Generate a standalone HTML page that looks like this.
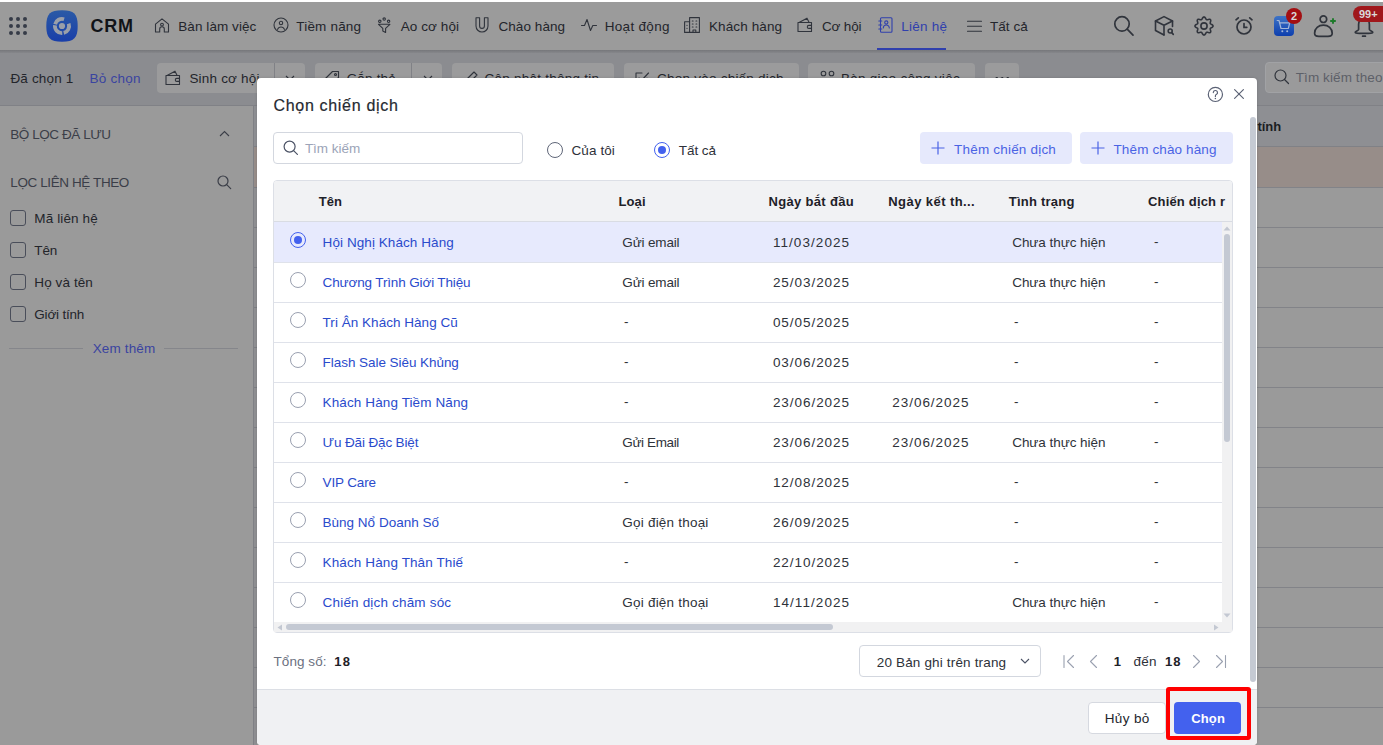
<!DOCTYPE html>
<html><head><meta charset="utf-8"><title>CRM</title>
<style>
html,body{margin:0;padding:0;}
body{width:1383px;height:745px;overflow:hidden;position:relative;font-family:"Liberation Sans", sans-serif;background:#9a9a9a;}
.t{position:absolute;white-space:nowrap;line-height:1;}
#bg,#modal,#top{position:absolute;left:0;top:0;width:1383px;height:745px;}
svg{display:block}
</style></head><body>
<div id="bg"><div style="position:absolute;left:0px;top:2px;width:1383px;height:48px;background:#9b9b9b"></div><div style="position:absolute;left:0px;top:50px;width:1383px;height:4px;background:linear-gradient(#76777b,#8b8c90)"></div><svg style="position:absolute;left:0px;top:0px;overflow:visible" width="40" height="50" viewBox="0 0 40 50"><g fill="#363b47"><circle cx="11" cy="19" r="2"/><circle cx="11" cy="26" r="2"/><circle cx="11" cy="33" r="2"/><circle cx="18" cy="19" r="2"/><circle cx="18" cy="26" r="2"/><circle cx="18" cy="33" r="2"/><circle cx="25" cy="19" r="2"/><circle cx="25" cy="26" r="2"/><circle cx="25" cy="33" r="2"/></g></svg><svg style="position:absolute;left:46px;top:10px;overflow:visible" width="32" height="32" viewBox="0 0 32 32"><defs><linearGradient id="lg" x1="0" y1="0" x2="0" y2="1"><stop offset="0" stop-color="#2b5aa6"/><stop offset="1" stop-color="#193ea9"/></linearGradient></defs>
<path d="M16 0.3C28 0.3 31.7 4 31.7 16S28 31.7 16 31.7 0.3 28 0.3 16 4 0.3 16 0.3Z" fill="url(#lg)"/>
<g fill="none" stroke="#9a9fa9" stroke-width="3.8"><path d="M9.14 14.16A7.1 7.1 0 0 1 18.08 9.21"/><path d="M22.67 13.57A7.1 7.1 0 0 1 17.72 22.89"/><path d="M16.25 23.10A7.1 7.1 0 0 1 8.94 15.26"/></g>
<circle cx="16" cy="16" r="3.1" fill="#9a9fa9"/></svg><svg style="position:absolute;left:153.7px;top:17px;overflow:visible" width="16" height="16" viewBox="0 0 16 16"><g fill="none" stroke="#30343c" stroke-width="1.1" stroke-linecap="round" stroke-linejoin="round"><path d="M1.5 7.2L8 1.8l6.5 5.4V15H10.3v-3a2.3 2.3 0 0 0-4.6 0v3H1.5Z"/><circle cx="8" cy="7.6" r="1.4"/></g></svg><svg style="position:absolute;left:272.7px;top:17px;overflow:visible" width="16" height="16" viewBox="0 0 16 16"><g fill="none" stroke="#30343c" stroke-width="1.1" stroke-linecap="round" stroke-linejoin="round"><circle cx="8" cy="8" r="7"/><circle cx="8" cy="6" r="1.7"/><path d="M4.6 12.4a3.6 3.6 0 0 1 6.8 0"/></g></svg><svg style="position:absolute;left:377.6px;top:17px;overflow:visible" width="16" height="16" viewBox="0 0 16 16"><g fill="none" stroke="#30343c" stroke-width="1.1" stroke-linecap="round" stroke-linejoin="round"><circle cx="1.8" cy="4.3" r="1.2"/><circle cx="6.2" cy="2.1" r="1.2"/><circle cx="10.6" cy="4.3" r="1.2"/><path d="M0.5 7.3h11.4L7.6 11.3v4.2l-2.8-1.5v-2.7Z"/></g></svg><svg style="position:absolute;left:474.8px;top:17px;overflow:visible" width="16" height="16" viewBox="0 0 16 16"><g fill="none" stroke="#30343c" stroke-width="1.1" stroke-linecap="round" stroke-linejoin="round"><path d="M1 0.8h3.6v8.2a2.4 2.4 0 0 0 4.8 0V0.8h3.6v8.2a6 6 0 0 1-12 0Z"/></g></svg><svg style="position:absolute;left:581px;top:17px;overflow:visible" width="16" height="16" viewBox="0 0 16 16"><g fill="none" stroke="#30343c" stroke-width="1.1" stroke-linecap="round" stroke-linejoin="round"><path d="M0.5 8.5h3l2.5-6 3.5 11 2.3-5h3.7"/></g></svg><svg style="position:absolute;left:683.9px;top:17px;overflow:visible" width="16" height="16" viewBox="0 0 16 16"><g fill="none" stroke="#30343c" stroke-width="1.1" stroke-linecap="round" stroke-linejoin="round"><path d="M0.6 15.4V4.8h5V0.6h9.8v14.8Z"/><path d="M5.6 4.8v10.6"/><path d="M3 8.2v.3M3 11.2v.3M8.3 4h.8M12 4h.8M8.3 7h.8M12 7h.8M8.3 10h.8M12 10h.8"/><path d="M9 15.4v-2.4h2.8v2.4"/></g></svg><svg style="position:absolute;left:796.9px;top:17px;overflow:visible" width="16" height="16" viewBox="0 0 16 16"><g fill="none" stroke="#30343c" stroke-width="1.1" stroke-linecap="round" stroke-linejoin="round"><path d="M1 5.5h13.5v9H1Z" /><path d="M2.5 5.3L10 1.2l2 4"/><path d="M14.5 8.4h-2.7a1.5 1.5 0 0 0 0 3h2.7"/></g></svg><svg style="position:absolute;left:878.2px;top:17px;overflow:visible" width="16" height="16" viewBox="0 0 16 16"><g fill="none" stroke="#3040ad" stroke-width="1.1" stroke-linecap="round" stroke-linejoin="round"><rect x="2.5" y="0.8" width="11.5" height="14.4" rx="1"/><circle cx="8.3" cy="5.5" r="1.6"/><path d="M5.3 11a3 3 0 0 1 6 0"/><path d="M0.8 4h3M0.8 8h3M0.8 12h3"/></g></svg><svg style="position:absolute;left:966.7px;top:17px;overflow:visible" width="16" height="16" viewBox="0 0 16 16"><g fill="none" stroke="#30343c" stroke-width="1.1" stroke-linecap="round" stroke-linejoin="round"><path d="M0.5 4.3h14M0.5 9.3h14M0.5 14.2h14"/></g></svg><div style="position:absolute;left:877px;top:48px;width:69px;height:2px;background:#3040ad"></div><svg style="position:absolute;left:1113px;top:16px;overflow:visible" width="22" height="22" viewBox="0 0 22 22"><g fill="none" stroke="#30343c" stroke-width="1.7" stroke-linecap="round"><circle cx="9" cy="7.9" r="7.2"/><path d="M14.2 13.2l5.8 5.9"/></g></svg><svg style="position:absolute;left:1154px;top:16px;overflow:visible" width="22" height="22" viewBox="0 0 22 22"><g fill="none" stroke="#30343c" stroke-width="1.6" stroke-linejoin="round" stroke-linecap="round"><path d="M18.5 10.5V5L10 0.6 1.5 5v9.5L10 19"/><path d="M1.5 5L10 9.3 18.5 5M10 9.3V19"/><circle cx="16.2" cy="15" r="2"/><path d="M17.7 16.6l1.6 1.8"/></g></svg><svg style="position:absolute;left:1194px;top:16px;overflow:visible" width="20" height="20" viewBox="0 0 20 20"><g fill="none" stroke="#30343c" stroke-width="1.6" stroke-linejoin="round"><path d="M10.00 0.95 L10.58 1.12 L11.11 1.60 L11.54 2.25 L11.90 2.92 L12.22 3.46 L12.58 3.76 L13.05 3.81 L13.66 3.66 L14.39 3.43 L15.16 3.28 L15.87 3.31 L16.40 3.60 L16.69 4.13 L16.72 4.84 L16.57 5.61 L16.34 6.34 L16.19 6.95 L16.24 7.42 L16.54 7.78 L17.08 8.10 L17.75 8.46 L18.40 8.89 L18.88 9.42 L19.05 10.00 L18.88 10.58 L18.40 11.11 L17.75 11.54 L17.08 11.90 L16.54 12.22 L16.24 12.58 L16.19 13.05 L16.34 13.66 L16.57 14.39 L16.72 15.16 L16.69 15.87 L16.40 16.40 L15.87 16.69 L15.16 16.72 L14.39 16.57 L13.66 16.34 L13.05 16.19 L12.58 16.24 L12.22 16.54 L11.90 17.08 L11.54 17.75 L11.11 18.40 L10.58 18.88 L10.00 19.05 L9.42 18.88 L8.89 18.40 L8.46 17.75 L8.10 17.08 L7.78 16.54 L7.42 16.24 L6.95 16.19 L6.34 16.34 L5.61 16.57 L4.84 16.72 L4.13 16.69 L3.60 16.40 L3.31 15.87 L3.28 15.16 L3.43 14.39 L3.66 13.66 L3.81 13.05 L3.76 12.58 L3.46 12.22 L2.92 11.90 L2.25 11.54 L1.60 11.11 L1.12 10.58 L0.95 10.00 L1.12 9.42 L1.60 8.89 L2.25 8.46 L2.92 8.10 L3.46 7.78 L3.76 7.42 L3.81 6.95 L3.66 6.34 L3.43 5.61 L3.28 4.84 L3.31 4.13 L3.60 3.60 L4.13 3.31 L4.84 3.28 L5.61 3.43 L6.34 3.66 L6.95 3.81 L7.42 3.76 L7.78 3.46 L8.10 2.92 L8.46 2.25 L8.89 1.60 L9.42 1.12Z"/><circle cx="10" cy="10" r="3.1"/></g></svg><svg style="position:absolute;left:1234px;top:16px;overflow:visible" width="20" height="20" viewBox="0 0 20 20"><g fill="none" stroke="#30343c" stroke-width="1.7" stroke-linecap="round"><circle cx="10" cy="11" r="7"/><path d="M10 7.5v3.8h2.8M2 3.8L4.3 1.8M18 3.8l-2.3-2"/></g></svg><svg style="position:absolute;left:1274px;top:16px;overflow:visible" width="20" height="20" viewBox="0 0 20 20"><defs><linearGradient id="cg" x1="0" y1="0" x2="0" y2="1"><stop offset="0" stop-color="#3d73c6"/><stop offset="1" stop-color="#0e3fae"/></linearGradient></defs><rect width="20" height="20" rx="4" fill="url(#cg)"/><g fill="none" stroke="#a3b6d8" stroke-width="1.2" stroke-linecap="round" stroke-linejoin="round"><path d="M3.2 4.5h1.8l2 8h7.3l1.4-5.6H5.6"/></g><circle cx="8.3" cy="15.2" r="1" fill="#a3b6d8"/><circle cx="13.2" cy="15.2" r="1" fill="#a3b6d8"/></svg><div style="position:absolute;left:1286px;top:8px;width:16px;height:16px;border-radius:50%;background:#a30f12;color:#d9d9d9;font:700 11px/16px 'Liberation Sans',sans-serif;text-align:center">2</div><svg style="position:absolute;left:1313px;top:15px;overflow:visible" width="24" height="23" viewBox="0 0 24 23"><g fill="none" stroke="#30343c" stroke-width="1.7" stroke-linecap="round"><circle cx="10.4" cy="4.2" r="3.3"/><path d="M1.6 18.2C1.6 13.2 5.5 10.2 10.4 10.2S19.2 13.2 19.2 18.2C19.2 20.6 17.8 21.3 15 21.3H5.8C3 21.3 1.6 20.6 1.6 18.2Z"/></g><path d="M20 3.2v5.6M17.2 6h5.6" stroke="#1d7a2a" stroke-width="1.9"/></svg><svg style="position:absolute;left:1354px;top:14px;overflow:visible" width="20" height="24" viewBox="0 0 20 24"><g fill="none" stroke="#30343c" stroke-width="1.7" stroke-linecap="round" stroke-linejoin="round"><path d="M10 4.5C6.5 4.5 4.6 7 4.6 10.5V15.5C4.6 16.6 1.2 17.2 1.2 18.2 1.2 19.1 3 19.3 10 19.3S18.8 19.1 18.8 18.2C18.8 17.2 15.4 16.6 15.4 15.5V10.5C15.4 7 13.5 4.5 10 4.5Z"/><path d="M8.6 22.2h2.8"/></g></svg><div style="position:absolute;left:1353px;top:6px;width:40px;height:16px;border-radius:8px;background:#a0181c;color:#d9d9d9;font:700 11px/16px 'Liberation Sans',sans-serif;padding-left:6px;box-sizing:border-box">99+</div><div style="position:absolute;left:0px;top:53px;width:1383px;height:53px;background:#8b8c90"></div><div style="position:absolute;left:157px;top:63px;width:148px;height:30px;background:#9b9b9c;border-radius:4px;"></div><div style="position:absolute;left:274px;top:63px;width:1px;height:30px;background:#808186"></div><div style="position:absolute;left:315px;top:63px;width:127px;height:30px;background:#9b9b9c;border-radius:4px;"></div><div style="position:absolute;left:411px;top:63px;width:1px;height:30px;background:#808186"></div><div style="position:absolute;left:452px;top:63px;width:162px;height:30px;background:#9b9b9c;border-radius:4px;"></div><div style="position:absolute;left:624px;top:63px;width:175px;height:30px;background:#9b9b9c;border-radius:4px;"></div><div style="position:absolute;left:808px;top:63px;width:167px;height:30px;background:#9b9b9c;border-radius:4px;"></div><div style="position:absolute;left:985px;top:63px;width:34px;height:30px;background:#9b9b9c;border-radius:4px;"></div><svg style="position:absolute;left:165px;top:70px;overflow:visible" width="16" height="16" viewBox="0 0 16 16"><g fill="none" stroke="#30343c" stroke-width="1.1" stroke-linecap="round" stroke-linejoin="round"><path d="M1 5.5h13.5v9H1Z" /><path d="M2.5 5.3L10 1.2l2 4"/><path d="M14.5 8.4h-2.7a1.5 1.5 0 0 0 0 3h2.7"/></g></svg><svg style="position:absolute;left:285px;top:75px;overflow:visible" width="10" height="6" viewBox="0 0 10 6"><path d="M1 1l4 4 4-4" fill="none" stroke="#30343c" stroke-width="1.1"/></svg><svg style="position:absolute;left:324px;top:70px;overflow:visible" width="16" height="16" viewBox="0 0 16 16"><g fill="none" stroke="#30343c" stroke-width="1.1" stroke-linecap="round" stroke-linejoin="round"><path d="M1.5 8.5L8.5 1.5h6v6l-7 7Z"/><circle cx="11.5" cy="4.5" r="1"/></g></svg><svg style="position:absolute;left:423px;top:75px;overflow:visible" width="10" height="6" viewBox="0 0 10 6"><path d="M1 1l4 4 4-4" fill="none" stroke="#30343c" stroke-width="1.1"/></svg><svg style="position:absolute;left:463px;top:70px;overflow:visible" width="16" height="16" viewBox="0 0 16 16"><g fill="none" stroke="#30343c" stroke-width="1.1" stroke-linecap="round" stroke-linejoin="round"><path d="M2 14l1-4 8-8 3 3-8 8Z"/></g></svg><svg style="position:absolute;left:634px;top:70px;overflow:visible" width="16" height="16" viewBox="0 0 16 16"><g fill="none" stroke="#30343c" stroke-width="1.1" stroke-linecap="round" stroke-linejoin="round"><path d="M13 8v6H2V3h6"/><path d="M5 8l2.5 2.5L14.5 3"/></g></svg><svg style="position:absolute;left:820px;top:70px;overflow:visible" width="16" height="16" viewBox="0 0 16 16"><g fill="none" stroke="#30343c" stroke-width="1.1" stroke-linecap="round" stroke-linejoin="round"><circle cx="3.5" cy="3.5" r="2.3"/><circle cx="11.5" cy="3.5" r="2.3"/></g></svg><div style="position:absolute;left:995px;top:77px;width:14px;height:3px;background:radial-gradient(circle at 1.5px 1.5px,#30343c 1.3px,transparent 1.5px) 0 0/5.5px 3px repeat-x"></div><div style="position:absolute;left:1265px;top:62px;width:135px;height:31px;background:#9a9a9b;border:1px solid #a1a2a5;border-radius:4px;box-sizing:border-box"></div><svg style="position:absolute;left:1274px;top:69px;overflow:visible" width="16" height="16" viewBox="0 0 16 16"><g fill="none" stroke="#30343c" stroke-width="1.2" stroke-linecap="round"><circle cx="6.5" cy="6.5" r="5.5"/><path d="M10.5 10.5l4 4"/></g></svg><div style="position:absolute;left:0px;top:105px;width:1383px;height:1px;background:#808186"></div><div style="position:absolute;left:0px;top:106px;width:253px;height:639px;background:#9a9a9a"></div><div style="position:absolute;left:253px;top:106px;width:1px;height:639px;background:#7f8085"></div><svg style="position:absolute;left:219px;top:130px;overflow:visible" width="11" height="7" viewBox="0 0 11 7"><path d="M1 6l4.5-4.5L10 6" fill="none" stroke="#3b3e48" stroke-width="1.1"/></svg><svg style="position:absolute;left:217px;top:175px;overflow:visible" width="15" height="15" viewBox="0 0 15 15"><g fill="none" stroke="#3b3e48" stroke-width="1.2" stroke-linecap="round"><circle cx="6" cy="6" r="5"/><path d="M9.7 9.7l4 4"/></g></svg><div style="position:absolute;left:10px;top:210px;width:16px;height:16px;border:1px solid #4a4e5a;border-radius:3px;box-sizing:border-box"></div><div style="position:absolute;left:10px;top:242px;width:16px;height:16px;border:1px solid #4a4e5a;border-radius:3px;box-sizing:border-box"></div><div style="position:absolute;left:10px;top:274px;width:16px;height:16px;border:1px solid #4a4e5a;border-radius:3px;box-sizing:border-box"></div><div style="position:absolute;left:10px;top:306px;width:16px;height:16px;border:1px solid #4a4e5a;border-radius:3px;box-sizing:border-box"></div><div style="position:absolute;left:9px;top:348px;width:74px;height:1px;background:#85868b"></div><div style="position:absolute;left:164px;top:348px;width:74px;height:1px;background:#85868b"></div><div style="position:absolute;left:254px;top:106px;width:1129px;height:41px;background:#8e8f93"></div><div style="position:absolute;left:254px;top:146px;width:1129px;height:1px;background:#808186"></div><div style="position:absolute;left:254px;top:147px;width:1129px;height:40px;background:#978d89"></div><div style="position:absolute;left:254px;top:187px;width:1129px;height:1px;background:#828388"></div><div style="position:absolute;left:254px;top:227px;width:1129px;height:1px;background:#828388"></div><div style="position:absolute;left:254px;top:267px;width:1129px;height:1px;background:#828388"></div><div style="position:absolute;left:254px;top:307px;width:1129px;height:1px;background:#828388"></div><div style="position:absolute;left:254px;top:347px;width:1129px;height:1px;background:#828388"></div><div style="position:absolute;left:254px;top:387px;width:1129px;height:1px;background:#828388"></div><div style="position:absolute;left:254px;top:427px;width:1129px;height:1px;background:#828388"></div><div style="position:absolute;left:254px;top:467px;width:1129px;height:1px;background:#828388"></div><div style="position:absolute;left:254px;top:507px;width:1129px;height:1px;background:#828388"></div><div style="position:absolute;left:254px;top:547px;width:1129px;height:1px;background:#828388"></div><div style="position:absolute;left:254px;top:587px;width:1129px;height:1px;background:#828388"></div><div style="position:absolute;left:254px;top:627px;width:1129px;height:1px;background:#828388"></div><div style="position:absolute;left:254px;top:667px;width:1129px;height:1px;background:#828388"></div><div style="position:absolute;left:254px;top:707px;width:1129px;height:1px;background:#828388"></div><div style="position:absolute;left:254px;top:187px;width:3px;height:558px;background:#8f8f92"></div><div style="position:absolute;left:254px;top:187px;width:3px;height:1px;background:#7d7e83"></div><div style="position:absolute;left:254px;top:227px;width:3px;height:1px;background:#7d7e83"></div><div style="position:absolute;left:254px;top:267px;width:3px;height:1px;background:#7d7e83"></div><div style="position:absolute;left:254px;top:307px;width:3px;height:1px;background:#7d7e83"></div><div style="position:absolute;left:254px;top:347px;width:3px;height:1px;background:#7d7e83"></div><div style="position:absolute;left:254px;top:387px;width:3px;height:1px;background:#7d7e83"></div><div style="position:absolute;left:254px;top:427px;width:3px;height:1px;background:#7d7e83"></div><div style="position:absolute;left:254px;top:467px;width:3px;height:1px;background:#7d7e83"></div><div style="position:absolute;left:254px;top:507px;width:3px;height:1px;background:#7d7e83"></div><div style="position:absolute;left:254px;top:547px;width:3px;height:1px;background:#7d7e83"></div><div style="position:absolute;left:254px;top:587px;width:3px;height:1px;background:#7d7e83"></div><div style="position:absolute;left:254px;top:627px;width:3px;height:1px;background:#7d7e83"></div><div style="position:absolute;left:254px;top:667px;width:3px;height:1px;background:#7d7e83"></div><div style="position:absolute;left:254px;top:707px;width:3px;height:1px;background:#7d7e83"></div><div class="t" style="left:90.50px;top:17.00px;font-size:18px;color:#111318;font-weight:700;letter-spacing:0.720px;">CRM</div><div class="t" style="left:178.30px;top:20.00px;font-size:13.5px;color:#23252b;letter-spacing:0.062px;">Bàn làm việc</div><div class="t" style="left:296.30px;top:20.00px;font-size:13.5px;color:#23252b;letter-spacing:0.187px;">Tiềm năng</div><div class="t" style="left:400.70px;top:20.00px;font-size:13.5px;color:#23252b;letter-spacing:0.092px;">Ao cơ hội</div><div class="t" style="left:498.40px;top:20.00px;font-size:13.5px;color:#23252b;letter-spacing:0.077px;">Chào hàng</div><div class="t" style="left:604.70px;top:20.00px;font-size:13.5px;color:#23252b;letter-spacing:0.308px;">Hoạt động</div><div class="t" style="left:708.90px;top:20.00px;font-size:13.5px;color:#23252b;letter-spacing:0.124px;">Khách hàng</div><div class="t" style="left:821.90px;top:20.00px;font-size:13.5px;color:#23252b;letter-spacing:-0.139px;">Cơ hội</div><div class="t" style="left:901.30px;top:20.00px;font-size:13.5px;color:#3040ad;letter-spacing:0.247px;">Liên hệ</div><div class="t" style="left:990.00px;top:20.00px;font-size:13.5px;color:#23252b;letter-spacing:0.033px;">Tất cả</div><div class="t" style="left:10.40px;top:72.20px;font-size:13.5px;color:#23252b;letter-spacing:0.167px;">Đã chọn 1</div><div class="t" style="left:89.60px;top:72.20px;font-size:13.5px;color:#3a44a0;letter-spacing:0.222px;">Bỏ chọn</div><div class="t" style="left:189.40px;top:72.20px;font-size:13.5px;color:#23252b;letter-spacing:0.194px;">Sinh cơ hội</div><div class="t" style="left:346.70px;top:72.20px;font-size:13.5px;color:#23252b;letter-spacing:0.172px;">Gắn thẻ</div><div class="t" style="left:484.40px;top:72.20px;font-size:13.5px;color:#23252b;letter-spacing:0.255px;">Cập nhật thông tin</div><div class="t" style="left:657.00px;top:72.20px;font-size:13.5px;color:#23252b;letter-spacing:0.235px;">Chọn vào chiến dịch</div><div class="t" style="left:840.90px;top:72.20px;font-size:13.5px;color:#23252b;letter-spacing:0.277px;">Bàn giao công việc</div><div class="t" style="left:1295.70px;top:71.00px;font-size:13.5px;color:#5d6068;letter-spacing:0.104px;">Tìm kiếm theo</div><div class="t" style="left:10.30px;top:128.00px;font-size:13.5px;color:#3b3e48;letter-spacing:-0.440px;">BỘ LỌC ĐÃ LƯU</div><div class="t" style="left:10.30px;top:176.00px;font-size:13.5px;color:#3b3e48;letter-spacing:-0.398px;">LỌC LIÊN HỆ THEO</div><div class="t" style="left:34.30px;top:212.20px;font-size:13.5px;color:#23252b;letter-spacing:0.120px;">Mã liên hệ</div><div class="t" style="left:34.30px;top:244.20px;font-size:13.5px;color:#23252b;letter-spacing:-0.093px;">Tên</div><div class="t" style="left:34.30px;top:276.20px;font-size:13.5px;color:#23252b;letter-spacing:0.098px;">Họ và tên</div><div class="t" style="left:34.30px;top:308.20px;font-size:13.5px;color:#23252b;letter-spacing:-0.193px;">Giới tính</div><div class="t" style="left:92.70px;top:341.50px;font-size:13.5px;color:#3a44a0;letter-spacing:0.136px;">Xem thêm</div><div class="t" style="left:1257.40px;top:120.20px;font-size:13px;color:#1b1d22;font-weight:700;">tính</div></div>
<div id="modal"><div style="position:absolute;left:257px;top:78px;width:1000px;height:667px;background:#ffffff;border-radius:4px 4px 4px 4px;box-shadow:0 0 3px rgba(0,0,0,0.15)"></div><svg style="position:absolute;left:1207px;top:86px;overflow:visible" width="17" height="17" viewBox="0 0 17 17"><g fill="none" stroke="#5b6275" stroke-width="1.2" stroke-linecap="round"><circle cx="8.4" cy="8.4" r="7.1"/><path d="M6.3 6.6a2.1 2.1 0 1 1 3 1.9c-.6.3-.9.8-.9 1.4v.5"/></g><circle cx="8.4" cy="12.4" r="0.75" fill="#5b6275"/></svg><svg style="position:absolute;left:1234px;top:89px;overflow:visible" width="10" height="10" viewBox="0 0 10 10"><path d="M0.6 0.6l8.8 8.8M9.4 0.6L0.6 9.4" stroke="#5b6275" stroke-width="1.15" stroke-linecap="round"/></svg><div style="position:absolute;left:273px;top:132px;width:250px;height:32px;border:1px solid #d3d7df;border-radius:4px;box-sizing:border-box"></div><svg style="position:absolute;left:283px;top:140px;overflow:visible" width="16" height="16" viewBox="0 0 16 16"><g fill="none" stroke="#4b5265" stroke-width="1.2" stroke-linecap="round"><circle cx="6.6" cy="6.6" r="5.5"/><path d="M10.6 10.6l3.8 3.8"/></g></svg><svg style="position:absolute;left:547px;top:142px;overflow:visible" width="16" height="16" viewBox="0 0 16 16"><circle cx="8" cy="8" r="7.5" fill="#fff" stroke="#5f6678" stroke-width="1"/></svg><svg style="position:absolute;left:654px;top:142px;overflow:visible" width="16" height="16" viewBox="0 0 16 16"><circle cx="8" cy="8" r="7.5" fill="none" stroke="#4361ee" stroke-width="1"/><circle cx="8" cy="8" r="4" fill="#4361ee"/></svg><div style="position:absolute;left:920px;top:132px;width:152px;height:32px;background:#e6e9fc;border-radius:4px"></div><svg style="position:absolute;left:931px;top:141px;overflow:visible" width="14" height="14" viewBox="0 0 14 14"><path d="M7 0.5v13M0.5 7h13" stroke="#4a63e4" stroke-width="1.2"/></svg><div style="position:absolute;left:1080px;top:132px;width:153px;height:32px;background:#e6e9fc;border-radius:4px"></div><svg style="position:absolute;left:1091px;top:141px;overflow:visible" width="14" height="14" viewBox="0 0 14 14"><path d="M7 0.5v13M0.5 7h13" stroke="#4a63e4" stroke-width="1.2"/></svg><div style="position:absolute;left:273px;top:180px;width:960px;height:453px;border:1px solid #dcdfe6;border-radius:4px;box-sizing:border-box;overflow:hidden"></div><div style="position:absolute;left:274px;top:181px;width:958px;height:40px;background:#f1f2f4;border-radius:3px 3px 0 0"></div><div style="position:absolute;left:274px;top:221px;width:958px;height:1px;background:#d9dce3"></div><div style="position:absolute;left:274px;top:222px;width:948px;height:40px;background:#e7eafd"></div><div style="position:absolute;left:274px;top:262px;width:948px;height:1px;background:#dfe2ea"></div><svg style="position:absolute;left:290px;top:232px;overflow:visible" width="16" height="16" viewBox="0 0 16 16"><circle cx="8" cy="8" r="7.5" fill="none" stroke="#4361ee" stroke-width="1"/><circle cx="8" cy="8" r="4" fill="#4361ee"/></svg><div style="position:absolute;left:274px;top:302px;width:948px;height:1px;background:#dfe2ea"></div><svg style="position:absolute;left:290px;top:272px;overflow:visible" width="16" height="16" viewBox="0 0 16 16"><circle cx="8" cy="8" r="7.5" fill="#fff" stroke="#9aa0b0" stroke-width="1"/></svg><div style="position:absolute;left:274px;top:342px;width:948px;height:1px;background:#dfe2ea"></div><svg style="position:absolute;left:290px;top:312px;overflow:visible" width="16" height="16" viewBox="0 0 16 16"><circle cx="8" cy="8" r="7.5" fill="#fff" stroke="#9aa0b0" stroke-width="1"/></svg><div style="position:absolute;left:274px;top:382px;width:948px;height:1px;background:#dfe2ea"></div><svg style="position:absolute;left:290px;top:352px;overflow:visible" width="16" height="16" viewBox="0 0 16 16"><circle cx="8" cy="8" r="7.5" fill="#fff" stroke="#9aa0b0" stroke-width="1"/></svg><div style="position:absolute;left:274px;top:422px;width:948px;height:1px;background:#dfe2ea"></div><svg style="position:absolute;left:290px;top:392px;overflow:visible" width="16" height="16" viewBox="0 0 16 16"><circle cx="8" cy="8" r="7.5" fill="#fff" stroke="#9aa0b0" stroke-width="1"/></svg><div style="position:absolute;left:274px;top:462px;width:948px;height:1px;background:#dfe2ea"></div><svg style="position:absolute;left:290px;top:432px;overflow:visible" width="16" height="16" viewBox="0 0 16 16"><circle cx="8" cy="8" r="7.5" fill="#fff" stroke="#9aa0b0" stroke-width="1"/></svg><div style="position:absolute;left:274px;top:502px;width:948px;height:1px;background:#dfe2ea"></div><svg style="position:absolute;left:290px;top:472px;overflow:visible" width="16" height="16" viewBox="0 0 16 16"><circle cx="8" cy="8" r="7.5" fill="#fff" stroke="#9aa0b0" stroke-width="1"/></svg><div style="position:absolute;left:274px;top:542px;width:948px;height:1px;background:#dfe2ea"></div><svg style="position:absolute;left:290px;top:512px;overflow:visible" width="16" height="16" viewBox="0 0 16 16"><circle cx="8" cy="8" r="7.5" fill="#fff" stroke="#9aa0b0" stroke-width="1"/></svg><div style="position:absolute;left:274px;top:582px;width:948px;height:1px;background:#dfe2ea"></div><svg style="position:absolute;left:290px;top:552px;overflow:visible" width="16" height="16" viewBox="0 0 16 16"><circle cx="8" cy="8" r="7.5" fill="#fff" stroke="#9aa0b0" stroke-width="1"/></svg><svg style="position:absolute;left:290px;top:592px;overflow:visible" width="16" height="16" viewBox="0 0 16 16"><circle cx="8" cy="8" r="7.5" fill="#fff" stroke="#9aa0b0" stroke-width="1"/></svg><div style="position:absolute;left:1222px;top:222px;width:10px;height:400px;background:#f1f1f2"></div><svg style="position:absolute;left:1223px;top:226px;overflow:visible" width="8" height="5" viewBox="0 0 8 5"><path d="M4 0.5L7.5 4.5H0.5Z" fill="#c3c8d2"/></svg><div style="position:absolute;left:1224px;top:234px;width:6px;height:208px;background:#c4c9d3;border-radius:3px"></div><svg style="position:absolute;left:1223px;top:613px;overflow:visible" width="8" height="5" viewBox="0 0 8 5"><path d="M4 4.5L7.5 0.5H0.5Z" fill="#c3c8d2"/></svg><div style="position:absolute;left:274px;top:622px;width:958px;height:10px;background:#f1f1f2"></div><svg style="position:absolute;left:277px;top:624px;overflow:visible" width="6" height="7" viewBox="0 0 6 7"><path d="M0.5 3.5L5 0.5V6.5Z" fill="#c3c8d2"/></svg><div style="position:absolute;left:286px;top:624px;width:547px;height:6px;background:#c4c9d3;border-radius:3px"></div><svg style="position:absolute;left:1213px;top:624px;overflow:visible" width="6" height="7" viewBox="0 0 6 7"><path d="M5.5 3.5L1 0.5V6.5Z" fill="#c3c8d2"/></svg><div style="position:absolute;left:859px;top:645px;width:182px;height:32px;border:1px solid #d3d7df;border-radius:4px;box-sizing:border-box"></div><svg style="position:absolute;left:1020px;top:658px;overflow:visible" width="10" height="6" viewBox="0 0 10 6"><path d="M1 1l4 4 4-4" fill="none" stroke="#4b5265" stroke-width="1.1"/></svg><svg style="position:absolute;left:1063px;top:655px;overflow:visible" width="12" height="13" viewBox="0 0 12 13"><g fill="none" stroke="#9aa1b0" stroke-width="1.1" stroke-linecap="round" stroke-linejoin="round"><path d="M1 0.5v12M10.5 0.5L4.5 6.5l6 6"/></g></svg><svg style="position:absolute;left:1089px;top:655px;overflow:visible" width="10" height="13" viewBox="0 0 10 13"><g fill="none" stroke="#9aa1b0" stroke-width="1.1" stroke-linecap="round" stroke-linejoin="round"><path d="M7.5 0.5l-6 6 6 6"/></g></svg><svg style="position:absolute;left:1192px;top:655px;overflow:visible" width="10" height="13" viewBox="0 0 10 13"><g fill="none" stroke="#9aa1b0" stroke-width="1.1" stroke-linecap="round" stroke-linejoin="round"><path d="M1.5 0.5l6 6-6 6"/></g></svg><svg style="position:absolute;left:1215px;top:655px;overflow:visible" width="12" height="13" viewBox="0 0 12 13"><g fill="none" stroke="#9aa1b0" stroke-width="1.1" stroke-linecap="round" stroke-linejoin="round"><path d="M10.5 0.5v12M1.5 0.5l6 6-6 6"/></g></svg><div style="position:absolute;left:1250px;top:117px;width:6px;height:565px;background:#c5cad3;border-radius:3px"></div><div style="position:absolute;left:257px;top:689px;width:1000px;height:56px;background:#f0f1f3;border-top:1px solid #dcdfe5;box-sizing:border-box;border-radius:0 0 4px 4px"></div><div style="position:absolute;left:1088px;top:702px;width:78px;height:32px;background:#fff;border:1px solid #d6d9e0;border-radius:4px;box-sizing:border-box"></div><div style="position:absolute;left:1174px;top:702px;width:67px;height:32px;background:#4361ee;border-radius:4px"></div><div style="position:absolute;left:1166px;top:687px;width:85px;height:53px;border:4px solid #ff0000;border-radius:3px;box-sizing:border-box"></div><div class="t" style="left:273.50px;top:98.30px;font-size:16px;color:#252931;letter-spacing:0.681px;-webkit-text-stroke:0.2px #252931;">Chọn chiến dịch</div><div class="t" style="left:304.90px;top:141.80px;font-size:13.5px;color:#9ca4b8;letter-spacing:-0.031px;">Tìm kiếm</div><div class="t" style="left:571.50px;top:143.90px;font-size:13.5px;color:#2d3139;letter-spacing:0.100px;">Của tôi</div><div class="t" style="left:678.80px;top:143.90px;font-size:13.5px;color:#2d3139;letter-spacing:-0.047px;">Tất cả</div><div class="t" style="left:954.10px;top:143.10px;font-size:13.5px;color:#4a63e4;letter-spacing:0.194px;">Thêm chiến dịch</div><div class="t" style="left:1113.50px;top:143.10px;font-size:13.5px;color:#4a63e4;letter-spacing:0.127px;">Thêm chào hàng</div><div class="t" style="left:318.80px;top:194.90px;font-size:13px;color:#1e2128;font-weight:700;">Tên</div><div class="t" style="left:618.40px;top:194.90px;font-size:13px;color:#1e2128;font-weight:700;letter-spacing:0.135px;">Loại</div><div class="t" style="left:768.50px;top:194.90px;font-size:13px;color:#1e2128;font-weight:700;letter-spacing:0.329px;">Ngày bắt đầu</div><div class="t" style="left:888.30px;top:194.90px;font-size:13px;color:#1e2128;font-weight:700;letter-spacing:0.424px;">Ngày kết th...</div><div class="t" style="left:1008.80px;top:194.90px;font-size:13px;color:#1e2128;font-weight:700;letter-spacing:0.233px;">Tình trạng</div><div class="t" style="left:1148.00px;top:194.90px;font-size:13px;color:#1e2128;font-weight:700;letter-spacing:0.174px;">Chiến dịch r</div><div class="t" style="left:322.60px;top:236.00px;font-size:13.5px;color:#2a4bcc;letter-spacing:0.075px;">Hội Nghị Khách Hàng</div><div class="t" style="left:622.30px;top:236.00px;font-size:13.5px;color:#2e3239;letter-spacing:-0.160px;">Gửi email</div><div class="t" style="left:772.90px;top:236.00px;font-size:13.5px;color:#2e3239;letter-spacing:1.067px;">11/03/2025</div><div class="t" style="left:1012.20px;top:236.00px;font-size:13.5px;color:#2e3239;letter-spacing:-0.046px;">Chưa thực hiện</div><div class="t" style="left:1154.10px;top:235.00px;font-size:13.5px;color:#2e3239;">-</div><div class="t" style="left:322.60px;top:276.00px;font-size:13.5px;color:#2a4bcc;letter-spacing:-0.140px;">Chương Trình Giới Thiệu</div><div class="t" style="left:622.30px;top:276.00px;font-size:13.5px;color:#2e3239;letter-spacing:-0.160px;">Gửi email</div><div class="t" style="left:772.90px;top:276.00px;font-size:13.5px;color:#2e3239;letter-spacing:0.956px;">25/03/2025</div><div class="t" style="left:1012.20px;top:276.00px;font-size:13.5px;color:#2e3239;letter-spacing:-0.046px;">Chưa thực hiện</div><div class="t" style="left:1154.10px;top:275.00px;font-size:13.5px;color:#2e3239;">-</div><div class="t" style="left:322.60px;top:316.00px;font-size:13.5px;color:#2a4bcc;letter-spacing:0.032px;">Tri Ân Khách Hàng Cũ</div><div class="t" style="left:623.90px;top:315.00px;font-size:13.5px;color:#2e3239;">-</div><div class="t" style="left:772.90px;top:316.00px;font-size:13.5px;color:#2e3239;letter-spacing:0.956px;">05/05/2025</div><div class="t" style="left:1013.90px;top:315.00px;font-size:13.5px;color:#2e3239;">-</div><div class="t" style="left:1154.10px;top:315.00px;font-size:13.5px;color:#2e3239;">-</div><div class="t" style="left:322.60px;top:356.00px;font-size:13.5px;color:#2a4bcc;letter-spacing:-0.053px;">Flash Sale Siêu Khủng</div><div class="t" style="left:623.90px;top:355.00px;font-size:13.5px;color:#2e3239;">-</div><div class="t" style="left:772.90px;top:356.00px;font-size:13.5px;color:#2e3239;letter-spacing:0.956px;">03/06/2025</div><div class="t" style="left:1013.90px;top:355.00px;font-size:13.5px;color:#2e3239;">-</div><div class="t" style="left:1154.10px;top:355.00px;font-size:13.5px;color:#2e3239;">-</div><div class="t" style="left:322.60px;top:396.00px;font-size:13.5px;color:#2a4bcc;letter-spacing:0.112px;">Khách Hàng Tiềm Năng</div><div class="t" style="left:623.90px;top:395.00px;font-size:13.5px;color:#2e3239;">-</div><div class="t" style="left:772.90px;top:396.00px;font-size:13.5px;color:#2e3239;letter-spacing:0.956px;">23/06/2025</div><div class="t" style="left:892.30px;top:396.00px;font-size:13.5px;color:#2e3239;letter-spacing:0.956px;">23/06/2025</div><div class="t" style="left:1013.90px;top:395.00px;font-size:13.5px;color:#2e3239;">-</div><div class="t" style="left:1154.10px;top:395.00px;font-size:13.5px;color:#2e3239;">-</div><div class="t" style="left:322.60px;top:436.00px;font-size:13.5px;color:#2a4bcc;letter-spacing:-0.139px;">Ưu Đãi Đặc Biệt</div><div class="t" style="left:622.30px;top:436.00px;font-size:13.5px;color:#2e3239;letter-spacing:-0.371px;">Gửi Email</div><div class="t" style="left:772.90px;top:436.00px;font-size:13.5px;color:#2e3239;letter-spacing:0.956px;">23/06/2025</div><div class="t" style="left:892.30px;top:436.00px;font-size:13.5px;color:#2e3239;letter-spacing:0.956px;">23/06/2025</div><div class="t" style="left:1012.20px;top:436.00px;font-size:13.5px;color:#2e3239;letter-spacing:-0.046px;">Chưa thực hiện</div><div class="t" style="left:1154.10px;top:435.00px;font-size:13.5px;color:#2e3239;">-</div><div class="t" style="left:322.60px;top:476.00px;font-size:13.5px;color:#2a4bcc;letter-spacing:-0.150px;">VIP Care</div><div class="t" style="left:623.90px;top:475.00px;font-size:13.5px;color:#2e3239;">-</div><div class="t" style="left:772.90px;top:476.00px;font-size:13.5px;color:#2e3239;letter-spacing:0.956px;">12/08/2025</div><div class="t" style="left:1013.90px;top:475.00px;font-size:13.5px;color:#2e3239;">-</div><div class="t" style="left:1154.10px;top:475.00px;font-size:13.5px;color:#2e3239;">-</div><div class="t" style="left:322.60px;top:516.00px;font-size:13.5px;color:#2a4bcc;">Bùng Nổ Doanh Số</div><div class="t" style="left:622.30px;top:516.00px;font-size:13.5px;color:#2e3239;letter-spacing:0.213px;">Gọi điện thoại</div><div class="t" style="left:772.90px;top:516.00px;font-size:13.5px;color:#2e3239;letter-spacing:0.956px;">26/09/2025</div><div class="t" style="left:1013.90px;top:515.00px;font-size:13.5px;color:#2e3239;">-</div><div class="t" style="left:1154.10px;top:515.00px;font-size:13.5px;color:#2e3239;">-</div><div class="t" style="left:322.60px;top:556.00px;font-size:13.5px;color:#2a4bcc;letter-spacing:0.112px;">Khách Hàng Thân Thiế</div><div class="t" style="left:623.90px;top:555.00px;font-size:13.5px;color:#2e3239;">-</div><div class="t" style="left:772.90px;top:556.00px;font-size:13.5px;color:#2e3239;letter-spacing:0.956px;">22/10/2025</div><div class="t" style="left:1013.90px;top:555.00px;font-size:13.5px;color:#2e3239;">-</div><div class="t" style="left:1154.10px;top:555.00px;font-size:13.5px;color:#2e3239;">-</div><div class="t" style="left:322.60px;top:596.00px;font-size:13.5px;color:#2a4bcc;letter-spacing:0.176px;">Chiến dịch chăm sóc</div><div class="t" style="left:622.30px;top:596.00px;font-size:13.5px;color:#2e3239;letter-spacing:0.213px;">Gọi điện thoại</div><div class="t" style="left:772.90px;top:596.00px;font-size:13.5px;color:#2e3239;letter-spacing:1.067px;">14/11/2025</div><div class="t" style="left:1012.20px;top:596.00px;font-size:13.5px;color:#2e3239;letter-spacing:-0.046px;">Chưa thực hiện</div><div class="t" style="left:1154.10px;top:595.00px;font-size:13.5px;color:#2e3239;">-</div><div class="t" style="left:273.50px;top:655.00px;font-size:13.5px;color:#6b7080;letter-spacing:0.064px;">Tổng số:</div><div class="t" style="left:334.30px;top:655.00px;font-size:13px;color:#1e2128;font-weight:700;letter-spacing:1.171px;">18</div><div class="t" style="left:876.80px;top:655.50px;font-size:13.5px;color:#2d3139;letter-spacing:0.159px;">20 Bản ghi trên trang</div><div class="t" style="left:1113.70px;top:655.30px;font-size:13px;color:#1e2128;font-weight:700;">1</div><div class="t" style="left:1133.40px;top:655.30px;font-size:13.5px;color:#2d3139;letter-spacing:0.274px;">đến</div><div class="t" style="left:1165.00px;top:655.30px;font-size:13px;color:#1e2128;font-weight:700;letter-spacing:1.071px;">18</div><div class="t" style="left:1104.70px;top:711.70px;font-size:13.5px;color:#22252c;letter-spacing:0.380px;">Hủy bỏ</div><div class="t" style="left:1191.30px;top:711.70px;font-size:13px;color:#ffffff;font-weight:700;letter-spacing:0.107px;">Chọn</div></div>
<div id="top"><div style="position:absolute;left:0px;top:0px;width:1383px;height:2px;background:#ffffff"></div></div>
</body></html>
